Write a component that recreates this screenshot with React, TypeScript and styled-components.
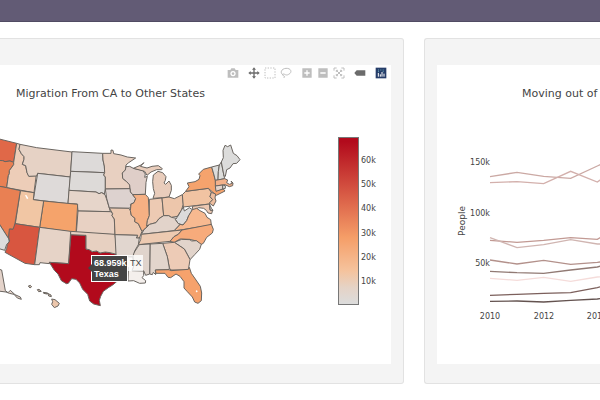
import React from "react";
import styled, { createGlobalStyle } from "styled-components";

const GlobalStyle = createGlobalStyle`
  * { box-sizing: border-box; }
  body { margin: 0; background: #fff; color: #444; overflow-x: hidden; font-family: "DejaVu Sans", Verdana, sans-serif; }
`;

const Header = styled.header`
  height: 22px;
  background: #625b75;
  border-bottom: 1px solid #514b63;
`;
const Board = styled.main`
  display: grid;
  grid-template-columns: minmax(0, 404fr) minmax(0, 176fr);
  gap: 20px;
  padding: 16px 0;
`;
const Card = styled.section<{ $side: "left" | "right" }>`
  border: 1px solid #e2e2e2;
  background: #f4f4f4;
  padding-top: 26px;
  padding-bottom: 19px;
  ${(p) =>
    p.$side === "left"
      ? "border-left: 0; border-radius: 0 3px 3px 0; padding-right: 12px;"
      : "border-right: 0; border-radius: 3px 0 0 3px; padding-left: 12px;"}
`;
const Panel = styled.div`
  background: #fff;
  overflow: hidden;
  padding-bottom: 34px;
`;
const ModeBar = styled.div`
  display: flex;
  justify-content: flex-end;
  gap: 5px;
  height: 16px;
  padding-right: 2px;
`;
const ToolGroup = styled.div`
  display: flex;
`;
const Tool = styled.button<{ $tone: string }>`
  display: flex;
  align-items: center;
  justify-content: center;
  width: 16px;
  height: 16px;
  padding: 0;
  border: 0;
  background: none;
  color: ${(p) => p.$tone};
`;
const Title = styled.h2<{ $indent: number }>`
  margin: 0;
  padding: 5px 0 0 ${(p) => p.$indent}px;
  font-size: 11px;
  line-height: 16px;
  font-weight: 400;
  white-space: nowrap;
`;
const PlotArea = styled.div`
  display: flex;
  justify-content: space-between;
  padding: 28px 12px 0 0;
`;
const MapFrame = styled.div`
  position: relative;
  width: 250px;
  height: 200px;
`;
const Hover = styled.div`
  position: absolute;
  left: 91px;
  top: 125px;
  width: 37px;
  height: 27px;
  padding: 2px 0 0 2px;
  background: #444;
  border: 1px solid #fff;
  color: #fff;
  font: 700 9px/11px "Liberation Sans", Arial, sans-serif;
  &::before {
    content: "";
    position: absolute;
    left: -4px;
    top: 8px;
    border: 4px solid transparent;
    border-left-width: 0;
    border-right-color: #444;
  }
`;
const HoverName = styled.div`
  position: absolute;
  left: 128px;
  top: 125px;
  width: 15px;
  height: 16px;
  padding-left: 2px;
  background: rgba(255, 255, 255, 0.8);
  font: 400 9px/16px "Liberation Sans", Arial, sans-serif;
`;
const Legend = styled.div`
  display: flex;
  gap: 2px;
  padding-top: 7px;
`;
const Ramp = styled.div`
  width: 21px;
  height: 168px;
  border: 1px solid #777;
  background: linear-gradient(to top, #dcdcdc 0%, #e5d3c6 10%, #f5c39d 20%, #f59e68 40%, #df6a4d 60%, #b20a1c 98%);
`;
const Ticks = styled.div`
  display: flex;
  flex-direction: column;
  justify-content: space-between;
  width: 18px;
  height: 157px;
  padding-top: 12px;
  font-size: 8px;
  line-height: 24px;
`;
const LineChart = styled.svg`
  display: block;
  width: 163px;
  height: 200px;
  margin-top: 28px;
  font-size: 8px;
`;

// Outlines are stored at three units per pixel.
const STATES: [string, string, string][] = [
  ["WA", "#e06848", "-6,26 50,40 41,97 30,93 15,95 8,92 -6,91"],
  ["OR", "#e98053", "-6,91 8,92 15,95 30,93 41,97 41,104 28,122 28,131 25,137 20,173 -6,168"],
  ["ID", "#edcdb8", "50,40 60,43 57,58 64,71 72,80 72,88 67,103 77,107 81,128 87,138 106,137 109,133 102,188 20,173 25,137 28,131 28,122 41,104 41,97"],
  ["MT", "#e6d2c5", "60,43 110,53 216,66 211,141 113,130 110,138 86,139 81,128 77,107 67,103 72,88 72,80 64,71 57,58"],
  ["WY", "#dedad9", "113,130 211,141 204,221 100,209"],
  ["ND", "#dddad9", "216,65 308,70 309,90 313,108 314,128 212,124"],
  ["SD", "#dddad8", "212,124 314,128 311,135 316,141 316,176 313,192 305,188 297,191 288,186 207,181"],
  ["NE", "#e6d5ca", "207,181 288,186 297,191 305,188 315,194 321,211 328,234 331,245 234,243 232,222 204,220"],
  ["KS", "#e8d1c3", "234,243 331,245 338,251 336,257 343,267 345,314 229,308"],
  ["CO", "#f5a36b", "131,213 233,223 228,308 119,292"],
  ["UT", "#f1c6a4", "61,182 102,188 100,209 131,213 119,292 46,281"],
  ["NV", "#e98053", "-6,168 20,173 61,182 43,292 38,298 29,297 26,326 -6,276"],
  ["CA", "#dcdcdc", "-6,276 26,326 28,336 20,343 14,361 -6,355"],
  ["AZ", "#d85640", "45,281 119,292 104,404 75,400 15,367 20,355 22,343 29,333 26,322 28,297 39,298"],
  ["NM", "#e6d3c7", "119,292 212,304 206,401 148,397 149,401 120,398 118,404 104,404"],
  ["TX", "#b20a1c", "213,314 258,316 258,357 268,359 277,365 290,363 300,369 316,366 330,368 350,373 382,380 386,430 382,450 350,455 338,465 325,473 310,484 302,499 298,511 301,527 281,522 269,513 263,493 248,478 239,459 228,448 215,446 205,460 199,461 184,452 174,432 163,421 148,397 206,401"],
  ["OK", "#e7d0c1", "212,304 345,313 348,340 350,373 330,368 316,366 300,369 290,363 277,365 268,359 258,357 258,316 212,314"],
  ["MN", "#e8d0c1", "308,70 333,70 333,60 339,61 341,71 363,75 382,81 407,84 386,98 378,105 376,120 367,129 368,145 380,155 390,164 390,176 316,177 316,141 311,135 314,128 313,108 309,90"],
  ["WI", "#dfcec8", "378,110 389,109 400,115 428,121 436,132 434,142 442,139 438,157 436,193 398,194 391,186 389,165 380,155 368,145 367,129 376,120"],
  ["MI", "#e9cdbc", "400,115 423,105 432,98 421,109 441,114 456,109 475,107 487,116 485,119 470,119 453,126 441,136 434,124"],
  ["MI", "#e9cdbc", "460,135 474,124 488,128 498,140 496,151 492,159 497,163 507,153 514,166 514,181 507,201 488,203 459,205 464,190 460,176 458,155"],
  ["IA", "#ddd2cf", "316,177 390,176 391,186 398,194 407,206 402,218 391,223 393,231 387,235 328,234 320,205"],
  ["MO", "#ecc9b1", "328,234 387,235 391,242 394,256 405,265 404,275 415,281 426,304 418,324 409,324 413,316 345,314 343,267 336,257 338,251"],
  ["IL", "#f6b083", "398,194 436,193 445,203 448,257 442,272 441,291 432,299 426,304 415,281 404,275 405,265 394,256 391,242 393,223 402,218 407,206"],
  ["IN", "#edcab3", "448,208 486,204 491,257 477,266 468,278 449,283 440,288 442,272 448,257"],
  ["OH", "#edc6ab", "486,204 507,201 523,206 547,194 550,223 544,241 532,259 514,262 506,257 491,257"],
  ["PA", "#f1c3a2", "547,194 557,184 625,175 634,187 630,200 638,209 628,222 550,231"],
  ["NY", "#f5a36d", "557,184 567,170 562,159 585,155 597,148 600,137 596,132 610,118 635,111 642,135 646,151 648,181 670,177 675,183 649,196 625,175"],
  ["VT", "#dddddb", "635,111 658,105 655,125 654,150 646,151 642,135"],
  ["NH", "#dddddb", "658,105 664,96 672,138 674,146 654,150 655,125"],
  ["ME", "#dcdcdb", "664,96 670,83 669,61 675,46 683,50 692,45 700,70 711,77 720,89 710,100 699,101 690,114 680,119 676,139 672,138"],
  ["MA", "#f3b18a", "646,151 674,146 683,150 680,158 688,163 697,160 693,153 699,159 698,167 688,170 675,164 646,168"],
  ["CT", "#e4d3c9", "646,168 668,165 668,177 648,184"],
  ["RI", "#dddad8", "668,165 676,167 676,175 668,177"],
  ["NJ", "#edbd9e", "634,187 647,192 645,204 648,213 640,228 628,219 638,209 630,200"],
  ["MD", "#ecc8b2", "577,229 628,222 630,240 638,240 635,251 624,249 619,241 611,235 596,233 579,242"],
  ["DE", "#dddad8", "628,222 635,236 639,241 631,241"],
  ["WV", "#dcdbdb", "550,231 553,243 568,233 577,239 573,247 566,257 560,272 549,285 535,281 526,269 534,258 544,241"],
  ["VA", "#f7b990", "577,239 590,235 600,242 615,250 621,262 632,269 634,285 522,303 540,283 549,285 560,272 566,257"],
  ["KY", "#e2d3ca", "441,291 449,283 468,278 477,266 491,257 506,257 514,262 529,265 526,269 535,281 540,283 522,302 424,313 432,299"],
  ["TN", "#edcab1", "424,313 546,300 535,313 522,320 510,334 415,344 422,329"],
  ["NC", "#f7ab7b", "546,300 634,283 640,298 637,309 620,322 610,340 602,344 590,333 569,328 540,327 523,337 510,334 522,320 535,313"],
  ["SC", "#e2d4cb", "523,337 545,328 570,329 574,333 589,332 604,343 599,358 585,373 570,389 566,381 553,357"],
  ["GA", "#edcbb6", "488,340 523,337 553,357 566,381 570,389 565,420 513,420 508,414 502,380"],
  ["AL", "#e2d5cc", "450,342 488,340 502,380 508,414 507,419 466,420 467,434 460,427 457,434 449,432"],
  ["MS", "#e0d4cc", "418,344 450,342 449,432 437,436 431,423 396,422 402,405 398,374 412,353"],
  ["AR", "#e1d6cf", "345,314 413,316 409,324 418,324 415,344 404,363 398,381 352,379 348,373"],
  ["LA", "#f4efec", "352,379 398,381 402,405 396,422 431,423 431,437 426,443 437,452 436,459 419,460 401,452 384,453 385,412"],
  ["FL", "#f6a26c", "466,420 507,419 513,422 565,418 568,412 574,430 586,447 601,469 605,489 604,512 594,520 584,516 577,501 562,485 552,474 552,455 540,439 528,432 512,443 504,442 495,430 468,430"],
  ["AK", "#e4d3ca", "-6,417 5,420 16,482 24,488 31,481 45,494 61,501 64,508 52,504 42,493 28,490 18,486 -6,483"],
  ["HI", "#edc7ac", "155,507 165,509 178,520 174,528 163,533 155,523 158,515"],
  ["HI", "#cbb9a9", "85,468 91,466 95,470 90,474"],
  ["HI", "#cbb9a9", "112,479 117,478 124,484 116,485"],
  ["HI", "#9d9388", "130,487 143,489 141,492 131,490"],
  ["HI", "#cbb9a9", "143,490 153,495 154,500 146,498"],
];

const SERIES: [string, string][] = [
  ["#cba9a4", "180,110 261,97 341,109 422,115 502,78 520,70"],
  ["#d3b0ac", "180,128 261,125 341,131 422,94 502,126 520,113"],
  ["#c29a94", "180,301 261,307 341,301 422,293 502,298 520,287"],
  ["#d0b5b1", "180,293 261,323 341,314 422,299 502,312 520,312"],
  ["#b3918b", "180,360 261,372 341,361 422,373 502,367 520,365"],
  ["#917a74", "180,394 261,398 341,400 422,390 502,381 520,376"],
  ["#f5dcda", "180,415 261,421 341,412 422,424 502,411 520,410"],
  ["#7c605c", "180,466 261,463 341,460 422,458 502,443 520,438"],
  ["#645350", "180,484 261,483 341,486 422,481 502,477 520,474"],
];

type IconName = "camera" | "pan" | "box" | "lasso" | "plus" | "minus" | "auto" | "tag" | "logo";

const ART: Record<IconName, React.ReactNode> = {
  camera: (
    <path fillRule="evenodd" d="M2 9h8l3-5h10l3 5h8v23H2z M18 12a8 8 0 1 0 .1 0z M18 16a4 4 0 1 0 .1 0z" />
  ),
  pan: (
    <path d="M18 1l6 7h-4v8h8v-4l7 6-7 6v-4h-8v8h4l-6 7-6-7h4v-8H8v4l-7-6 7-6v4h8V8h-4z" />
  ),
  box: (
    <rect x="3" y="3" width="30" height="30" fill="none" stroke="currentColor" strokeWidth="3" strokeDasharray="4 4" />
  ),
  lasso: (
    <path d="M10 24C-1 19 3 5 18 4s20 12 8 18c-5 3-9 2-12 0-6-3-9 2-4 4 4 1 5 3 1 7" fill="none" stroke="currentColor" strokeWidth="3" />
  ),
  plus: <path fillRule="evenodd" d="M4 4h28v28H4z M16 10v6h-6v4h6v6h4v-6h6v-4h-6v-6z" />,
  minus: <path fillRule="evenodd" d="M4 4h28v28H4z M10 16v4h16v-4z" />,
  auto: (
    <path
      d="M3 11V3h8M25 3h8v8M33 25v8h-8M11 33H3v-8M10 10l16 16M26 10L10 26M15 10h-5v5M21 10h5v5M26 21v5h-5M15 26h-5v-5"
      fill="none"
      stroke="currentColor"
      strokeWidth="3"
    />
  ),
  tag: <path d="M1 18l7-8h26v16H8z" />,
  logo: (
    <g>
      <rect x="2" y="2" width="32" height="32" fill="#263d69" />
      <path d="M9 9h3M16 9h3M23 9h3M9 14h3M23 14h3" stroke="#68a8b8" strokeWidth="3" />
      <path d="M10 18v11M16 22v7M21 15v14M27 20v9" stroke="#fff" strokeWidth="3" />
    </g>
  ),
};

const TOOLS: { name: IconName; label: string; tone?: string }[][] = [
  [{ name: "camera", label: "Download plot" }],
  [
    { name: "pan", label: "Pan", tone: "#6b6b6b" },
    { name: "box", label: "Box select" },
    { name: "lasso", label: "Lasso select" },
  ],
  [
    { name: "plus", label: "Zoom in" },
    { name: "minus", label: "Zoom out" },
    { name: "auto", label: "Reset" },
  ],
  [{ name: "tag", label: "Show closest data on hover", tone: "#6b6b6b" }],
  [{ name: "logo", label: "Plotly" }],
];

function UsMap() {
  return (
    <svg width="250" height="180" viewBox="0 0 750 540" role="img" aria-label="Map of the United States">
      <g stroke="#6a6560" strokeWidth="3" strokeLinejoin="round">
        {STATES.map(([id, fill, points], i) => (
          <polygon key={id + i} fill={fill} points={points} />
        ))}
      </g>
      <path d="M75 196l4-1 6 10-4 3zM587 483l4-3 2 6-4 1z" fill="#fff" />
    </svg>
  );
}

export default function App() {
  return (
    <>
      <GlobalStyle />
      <Header />
      <Board>
        <Card $side="left">
          <Panel>
            <ModeBar>
              {TOOLS.map((group, i) => (
                <ToolGroup key={i}>
                  {group.map((t) => (
                    <Tool key={t.name} $tone={t.tone ?? "#bebebe"} type="button" aria-label={t.label}>
                      <svg width="12" height="12" viewBox="0 0 36 36" fill="currentColor">
                        {ART[t.name]}
                      </svg>
                    </Tool>
                  ))}
                </ToolGroup>
              ))}
            </ModeBar>
            <Title $indent={16}>Migration From CA to Other States</Title>
            <PlotArea>
              <MapFrame>
                <UsMap />
                <Hover>
                  68.959k
                  <br />
                  Texas
                </Hover>
                <HoverName>TX</HoverName>
              </MapFrame>
              <Legend>
                <Ramp />
                <Ticks>
                  {["60k", "50k", "40k", "30k", "20k", "10k"].map((t) => (
                    <span key={t}>{t}</span>
                  ))}
                </Ticks>
              </Legend>
            </PlotArea>
          </Panel>
        </Card>
        <Card $side="right">
          <Panel>
            <ModeBar />
            <Title $indent={85}>Moving out of</Title>
            <LineChart viewBox="0 0 163 200" role="img" aria-label="People moving, by year">
              <g transform="translate(-7 10) scale(0.33333)" fill="none" strokeWidth="4">
                {SERIES.map(([stroke, points]) => (
                  <polyline key={stroke} stroke={stroke} points={points} />
                ))}
              </g>
              <g fill="#444">
                <g textAnchor="end">
                  <text x="53" y="35">150k</text>
                  <text x="53" y="86">100k</text>
                  <text x="53" y="136">50k</text>
                </g>
                <g textAnchor="middle">
                  <text x="53" y="189">2010</text>
                  <text x="107" y="189">2012</text>
                  <text x="160" y="189">2014</text>
                  <text transform="translate(28 91) rotate(-90)" fontSize="9">People</text>
                </g>
              </g>
            </LineChart>
          </Panel>
        </Card>
      </Board>
    </>
  );
}
